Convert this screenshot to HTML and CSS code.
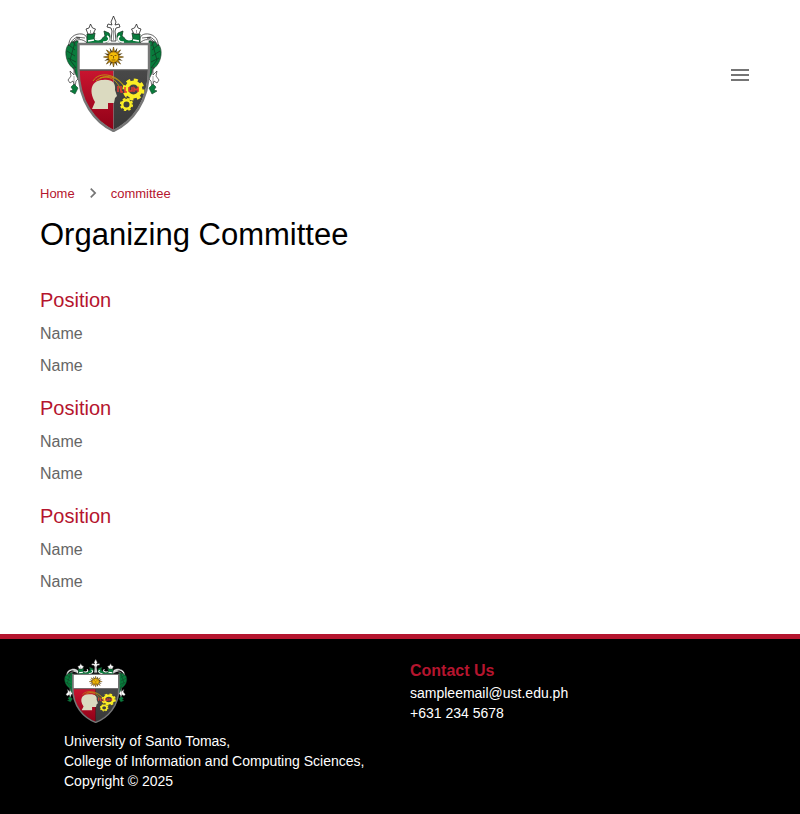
FILE: index.html
```
<!DOCTYPE html>
<html lang="en">
<head>
<meta charset="utf-8">
<meta name="viewport" content="width=device-width, initial-scale=1">
<title>Organizing Committee</title>
<link rel="stylesheet" href="styles.css">
</head>
<body>
<svg class="sprite" aria-hidden="true">
  <defs>
    <linearGradient id="red" x1="0" y1="0" x2="0" y2="1"><stop offset="0" stop-color="#c9142f"/><stop offset="1" stop-color="#8e0016"/></linearGradient>
    <linearGradient id="gray" x1="0" y1="0" x2="0" y2="1"><stop offset="0" stop-color="#484848"/><stop offset="1" stop-color="#383838"/></linearGradient>
    <clipPath id="shield"><path d="M14 29H83V53C83 85 67 105 48.500 114C30 105 14 85 14 53Z"/></clipPath>
    <g id="mantle">
      <path d="M13 25C5 24 0 30 1 39C2 47 6 51 10 54L9 61L14 64L13 46Z" fill="#087c3c" stroke="#153d25" stroke-width=".7"/>
      <path d="M4 29L10 34M2 35L10 40M3 42L11 46M10 26L5 44L11 52" fill="none" stroke="#123d24" stroke-width=".8"/>
      <path d="M4 30C3 22 10 17 17 18C22 19 23 23 22 27C17 22 12 23 8 27C9 24 12 22 15 22C10 20 7 24 4 30Z" fill="#fff" stroke="#222" stroke-width=".7"/>
      <path d="M11 21L20 22M8 26L11 30" stroke="#333" stroke-width=".7"/>
      <path d="M22 18L30 17L29 23L35 24L40 20L39 15L44 17C47 22 43 28 37 28H22Z" fill="#087c3c" stroke="#153d25" stroke-width=".8"/>
      <path d="M30 23C36 25 38 21 35 19M42 20C46 22 43 27 38 26M23 25L29 24" fill="none" stroke="#fff" stroke-width="1.600"/>
      <path d="M25.500 8L27.500 12L30.500 13L28 18H23L21 13L24 12Z" fill="#fff" stroke="#222" stroke-width=".8"/>
      <path d="M25.500 14V17" stroke="#555" stroke-width=".6"/>
      <path d="M9 51L10 57L13 63L11 65L10 71L8 65L5 67L3 64L6 60L5 55L9 59Z" fill="#fff" stroke="#333" stroke-width=".7"/>
      <path d="M9 60V68" stroke="#555" stroke-width=".5"/>
      <path d="M9 68L13 72L10 78L5 75L8 74L6 71Z" fill="#087c3c" stroke="#174329" stroke-width=".6"/>
    </g>
    <path id="ray" d="M-1.100 -5L0 -10L1.100 -5Z"/>
    <g id="rays"><use href="#ray"/><use href="#ray" transform="rotate(45)"/><use href="#ray" transform="rotate(90)"/><use href="#ray" transform="rotate(135)"/><use href="#ray" transform="rotate(180)"/><use href="#ray" transform="rotate(225)"/><use href="#ray" transform="rotate(270)"/><use href="#ray" transform="rotate(315)"/></g>
    <g id="gear" fill="none" stroke="#fbee25"><circle r="7" stroke-width="4"/><circle r="9.500" stroke-width="3" stroke-dasharray="4 3.461"/></g>
  </defs>
  <symbol id="crest" viewBox="0 0 98 116" preserveAspectRatio="none">
    <use href="#mantle"/>
    <use href="#mantle" transform="translate(97 0) scale(-1 1)"/>
    <path d="M48.500 0L51 6L50 9L54 8L55 11L51 12L50 15L51 25H46L47 15L46 12L42 11L43 8L47 9L46 6Z" fill="#fff" stroke="#222" stroke-width=".8"/>
    <path d="M48.500 12V24" stroke="#555" stroke-width=".6"/>
    <g clip-path="url(#shield)">
      <path d="M12 27H85V54H12Z" fill="#fff"/>
      <path d="M12 54H48.500V116H12Z" fill="url(#red)"/>
      <path d="M48.500 54H85V116H48.500Z" fill="url(#gray)"/>
      <path d="M13 54H84" stroke="#555" stroke-width="1.500"/>
    </g>
    <path d="M13.500 28H84V53C84 86 67 106 48.500 115C30 106 13.500 86 13.500 53Z" fill="none" stroke="#777" stroke-width="2.400"/>
    <g transform="translate(48.500 41)">
      <use href="#rays" fill="#c98e00" stroke="#5a3c00" stroke-width=".6"/>
      <use href="#rays" transform="rotate(22.500)" fill="#46340b"/>
      <circle r="5.200" fill="#f5bd08" stroke="#8a5600" stroke-width=".8"/>
      <path d="M-3 -1.500H-1M1 -1.500H3M0 -1V1.500M-2 3H2" stroke="#6e4600" stroke-width=".8"/>
    </g>
    <path d="M28 65C34 55 51 58 58 69C63 78 63 84 56 86M31 65C42 56 53 64 56 75M35 62C47 57 60 66 63 79" fill="none" stroke="#bc9c10" stroke-width=".9"/>
    <path d="M27 93L30 86C23 74 27 64 38 64C47 63 51 67 50 74L52 80L50 82L49 87H43V93Z" fill="#dbdac0"/>
    <use href="#gear" transform="translate(68.500 73.500)"/>
    <use href="#gear" transform="translate(61.500 88.500) scale(.6)"/>
    <path d="M53 70V76M56 70V76H58M60 71V76H62M64 71V75H67V71M69 76V72L71 74L73 72V76" fill="none" stroke="#e53b32" stroke-width="1.500"/>
  </symbol>
</svg>

<header class="site-header">
  <a class="brand" href="#" aria-label="Home page"><svg class="crest" aria-hidden="true"><use href="#crest"/></svg></a>
  <button class="menu-button" type="button" aria-label="Open menu">
    <svg viewBox="0 0 24 24" aria-hidden="true"><path d="M3 18h18v-2H3v2zm0-5h18v-2H3v2zm0-7v2h18V6H3z"/></svg>
  </button>
</header>

<main class="content">
  <nav class="breadcrumbs" aria-label="Breadcrumb">
    <a href="#">Home</a>
    <svg viewBox="0 0 24 24" aria-hidden="true"><path d="M10 6L8.590 7.410 13.170 12l-4.580 4.590L10 18l6-6z"/></svg>
    <a href="#">committee</a>
  </nav>
  <h1>Organizing Committee</h1>
  <section class="group"><h2>Position</h2><p>Name</p><p>Name</p></section>
  <section class="group"><h2>Position</h2><p>Name</p><p>Name</p></section>
  <section class="group"><h2>Position</h2><p>Name</p><p>Name</p></section>
</main>

<footer class="site-footer">
  <div class="about">
    <svg class="crest-small" aria-hidden="true"><use href="#crest"/></svg>
    <p>University of Santo Tomas,<br>College of Information and Computing Sciences,<br>Copyright © 2025</p>
  </div>
  <div class="contact">
    <h2>Contact Us</h2>
    <p>sampleemail@ust.edu.ph<br>+631 234 5678</p>
  </div>
</footer>
</body>
</html>
```
FILE: styles.css
```
* { box-sizing: border-box; }

body {
  margin: 0;
  min-height: 100vh;
  display: flex;
  flex-direction: column;
  background: #fff;
  color: #000;
  font-family: "Liberation Sans", Arial, sans-serif;
}

h1, h2, p { margin: 0; font-weight: 400; }
.sprite { position: absolute; width: 0; height: 0; }

.site-header {
  display: flex;
  align-items: center;
  justify-content: space-between;
  padding: 16px 36px 16px 65px;
}
.brand, .crest, .crest-small { display: block; }
.brand { padding-bottom: 2px; }
.crest { width: 98px; height: 116px; }
.menu-button {
  display: flex;
  padding: 12px;
  border: 0;
  background: none;
  cursor: pointer;
}
.menu-button svg { width: 24px; height: 24px; fill: #757575; }

.content { flex: 1; padding: 35px 40px 26px; }
.breadcrumbs {
  display: flex;
  align-items: center;
  gap: 8px;
  height: 16px;
  font-size: 13px;
}
.breadcrumbs a { color: #b5152e; text-decoration: none; }
.breadcrumbs svg { width: 20px; height: 20px; fill: #757575; }

h1 { margin: 14px 0 29px; font-size: 31px; line-height: 40px; }
.group { margin-bottom: 10px; }
.group h2 { margin-bottom: 2px; color: #b5152e; font-size: 20px; line-height: 32px; }
.group p { color: #666; font-size: 16px; font-weight: 300; line-height: 32px; }

.site-footer {
  display: grid;
  grid-template-columns: 1fr 1fr;
  gap: 20px;
  padding: 20px 64px 23px;
  border-top: 5px solid #b5152e;
  background: #000;
  color: #fff;
  font-size: 14px;
  line-height: 20px;
}
.crest-small { width: 64px; height: 64px; margin-bottom: 8px; }
.about p { white-space: nowrap; }
.contact h2 { color: #b5152e; font-size: 16px; font-weight: 700; line-height: 24px; }
```
